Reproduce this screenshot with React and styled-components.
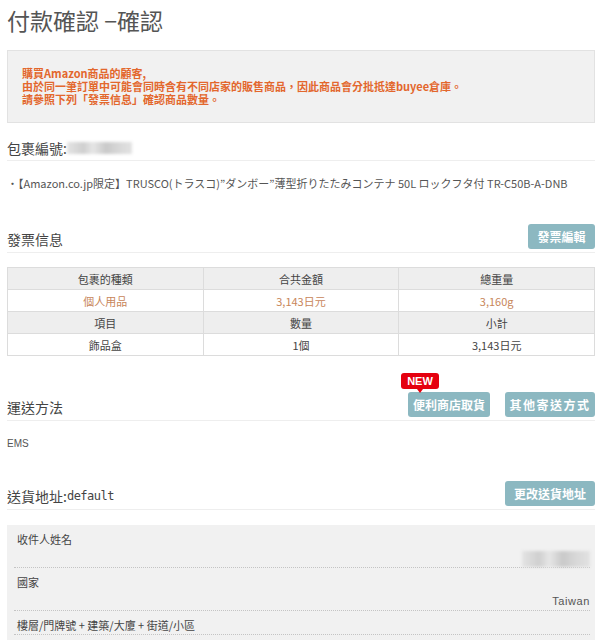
import styled, { createGlobalStyle } from "styled-components";

const Global = createGlobalStyle`
  html, body { margin: 0; padding: 0; background: #fff; }
  body { font-family: "Noto Sans CJK TC", "Noto Sans", sans-serif; color: #444; }
`;

const Page = styled.div`
  width: 602px;
  padding: 5px 7px 0 7px;
  box-sizing: border-box;
  overflow: hidden;
  height: 640px;
`;

const Title = styled.h1`
  margin: 0;
  font-size: 23px;
  line-height: 30px;
  font-weight: 400;
  color: #555;
`;

const Notice = styled.div`
  margin-top: 15px;
  height: 73px;
  box-sizing: border-box;
  background: #f1f1f1;
  border: 1px solid #e2e2e2;
  padding: 16px 14px 0 14px;
  font-size: 11px;
  line-height: 13px;
  font-weight: 700;
  color: #e3672d;
`;

const SectionHead = styled.div`
  display: flex;
  justify-content: space-between;
  align-items: flex-end;
  margin-top: ${(p) => p.$top}px;
  padding-bottom: ${(p) => p.$pad ?? 3}px;
  border-bottom: 1px solid #eeeeee;
`;

const HeadText = styled.div`
  font-size: 14px;
  line-height: 20px;
  color: #444;
  display: flex;
  align-items: center;
`;

const Mono = styled.span`
  font-family: "DejaVu Sans Mono", monospace;
  font-size: 12px;
  letter-spacing: -0.5px;
`;

const Blur = styled.span`
  display: inline-block;
  width: ${(p) => p.$w}px;
  height: ${(p) => p.$h}px;
  background: linear-gradient(90deg, #e4e4e4 0%, #cfcfcf 25%, #e6e6e6 40%, #c9c9c9 60%, #d8d8d8 80%, #e2e2e2 100%);
  filter: blur(1.5px);
`;

const Product = styled.div`
  margin-top: 14px;
  font-family: "Noto Sans CJK JP", sans-serif;
  font-size: 11px;
  line-height: 16px;
  color: #555;
  white-space: nowrap;
`;

const Buttons = styled.div`
  display: flex;
  gap: 15px;
`;

const Button = styled.button`
  all: unset;
  position: relative;
  box-sizing: border-box;
  width: ${(p) => p.$w}px;
  height: 25px;
  background: #8cb8c1;
  border-radius: 3px;
  color: #fff;
  font-size: 12px;
  font-weight: 700;
  text-align: center;
  line-height: 25px;
  letter-spacing: ${(p) => p.$ls ?? 0}px;
  cursor: pointer;
`;

const Badge = styled.span`
  position: absolute;
  left: -7px;
  top: -19px;
  width: 38px;
  height: 16px;
  background: #e5000f;
  border-radius: 3px;
  color: #fff;
  font-family: "Liberation Sans", Arial, sans-serif;
  font-size: 11px;
  font-weight: 700;
  line-height: 16px;
  letter-spacing: 0;
  &::after {
    content: "";
    position: absolute;
    left: 16px;
    bottom: -4px;
    border-left: 3px solid transparent;
    border-right: 3px solid transparent;
    border-top: 4px solid #e5000f;
  }
`;

const Table = styled.table`
  margin-top: 14px;
  width: 100%;
  border-collapse: collapse;
  font-size: 11px;
  table-layout: fixed;
`;

const Cell = styled.td`
  border: 1px solid #dcdcdc;
  height: 21px;
  padding: 0;
  text-align: center;
  background: ${(p) => (p.$head ? "#eeeeee" : "#fff")};
  color: ${(p) => (p.$accent ? "#c8865a" : "#444")};
`;

const Plain = styled.div`
  margin-top: ${(p) => p.$top}px;
  font-family: "Liberation Sans", Arial, sans-serif;
  font-size: 10px;
  line-height: 16px;
  color: #555;
`;

const AddressBox = styled.div`
  margin-top: 15px;
  background: #f1f1f1;
  padding: 0 5px 0 7px;
  height: 120px;
`;

const Field = styled.div`
  padding: 6px 0 1px 0;
  border-bottom: 1px dotted #c4c4c4;
`;

const Label = styled.div`
  padding-left: 3px;
  font-size: 11px;
  line-height: 16px;
  color: #444;
`;

const Value = styled.div`
  margin-top: 4px;
  height: 15px;
  display: flex;
  justify-content: flex-end;
  font-family: "Liberation Sans", Arial, sans-serif;
  font-size: 11px;
  line-height: 15px;
  letter-spacing: 0.6px;
  color: #555;
`;

export default function App() {
  return (
    <>
      <Global />
      <Page>
        <Title>付款確認 −確認</Title>
        <Notice>
          購買Amazon商品的顧客,
          <br />
          由於同一筆訂單中可能會同時含有不同店家的販售商品，因此商品會分批抵達buyee倉庫。
          <br />
          請參照下列「發票信息」確認商品數量。
        </Notice>

        <SectionHead $top={15} $pad={2}>
          <HeadText>
            包裹編號:
            <Blur $w={65} $h={12} />
          </HeadText>
        </SectionHead>
        <Product>
          ・【Amazon.co.jp限定】TRUSCO(トラスコ)”ダンボー”薄型折りたたみコンテナ 50L ロックフタ付 TR-C50B-A-DNB
        </Product>

        <SectionHead $top={33}>
          <HeadText>發票信息</HeadText>
          <Button $w={67}>發票編輯</Button>
        </SectionHead>
        <Table>
          <tbody>
            <tr>
              <Cell $head>包裹的種類</Cell>
              <Cell $head>合共金額</Cell>
              <Cell $head>總重量</Cell>
            </tr>
            <tr>
              <Cell $accent>個人用品</Cell>
              <Cell $accent>3,143日元</Cell>
              <Cell $accent>3,160g</Cell>
            </tr>
            <tr>
              <Cell $head>項目</Cell>
              <Cell $head>數量</Cell>
              <Cell $head>小計</Cell>
            </tr>
            <tr>
              <Cell>飾品盒</Cell>
              <Cell>1個</Cell>
              <Cell>3,143日元</Cell>
            </tr>
          </tbody>
        </Table>

        <SectionHead $top={36}>
          <HeadText>運送方法</HeadText>
          <Buttons>
            <Button $w={82}>
              <Badge>NEW</Badge>
              便利商店取貨
            </Button>
            <Button $w={90} $ls={1.5}>其他寄送方式</Button>
          </Buttons>
        </SectionHead>
        <Plain $top={15}>EMS</Plain>

        <SectionHead $top={29}>
          <HeadText>
            送貨地址:<Mono>default</Mono>
          </HeadText>
          <Button $w={90}>更改送貨地址</Button>
        </SectionHead>
        <AddressBox>
          <Field>
            <Label>收件人姓名</Label>
            <Value>
              <Blur $w={68} $h={16} />
            </Value>
          </Field>
          <Field>
            <Label>國家</Label>
            <Value>Taiwan</Value>
          </Field>
          <Field>
            <Label>樓層/門牌號 + 建築/大廈 + 街道/小區</Label>
          </Field>
        </AddressBox>
      </Page>
    </>
  );
}
